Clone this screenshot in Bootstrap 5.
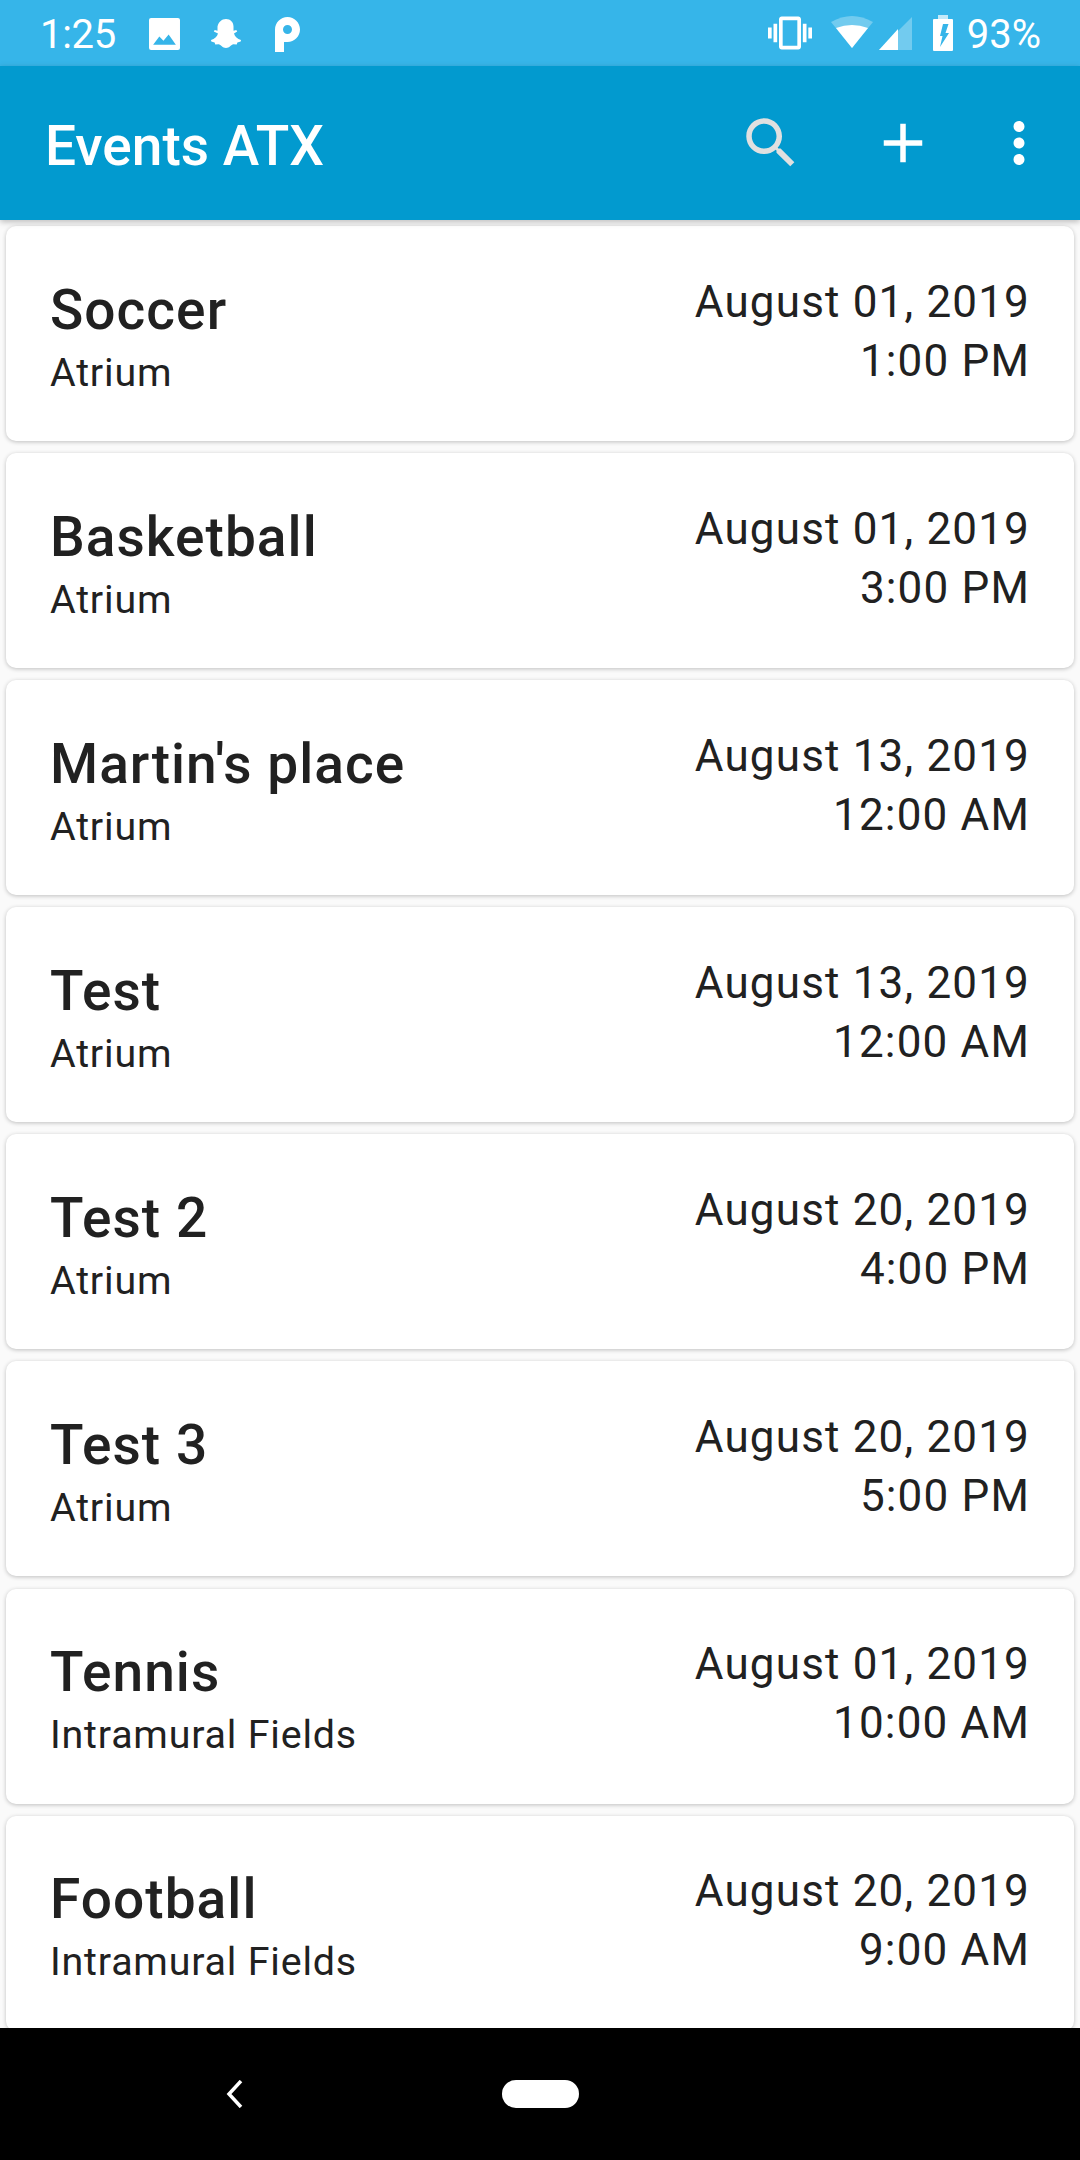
<!DOCTYPE html>
<html lang="en">
<head>
    <meta charset="UTF-8">
    <meta name="viewport" content="width=device-width, initial-scale=1.0">
    <title>Events ATX</title>
    <link href="https://cdn.jsdelivr.net/npm/bootstrap@5.3.0/dist/css/bootstrap.min.css" rel="stylesheet">
    <style>
        body {
            width: 1080px;
            height: 2160px;
            overflow: hidden;
            font-family: Roboto, "Liberation Sans", sans-serif;
            background: #fafafa;
            color: #212121;
        }

        /* ステータスバー */
        .status-strip {
            height: 66px;
            background: #36b5e9;
            color: #fff;
            padding: 0 39px 0 40px;
            font-size: 40px;
            line-height: 66px;
        }

        .status-strip svg { fill: #fff; display: block; }
        .status-time { width: 109px; margin-top: 4px; letter-spacing: -.3px; }
        .status-pct { margin-left: 14px; margin-top: 4px; }
        .ico-image { margin-top: 2px; }
        .ico-ghost { margin-left: 31px; margin-top: 2px; }
        .ico-p { margin-left: 34px; margin-top: 2px; }
        .ico-wifi { margin-left: 19px; margin-top: -2px; }
        .ico-signal { margin-left: 6px; }
        .ico-batt { margin-left: 21px; }

        /* アプリバー */
        .app-strip {
            height: 154px;
            background: #029acf;
            padding: 6px 28px 0 45px;
            box-shadow: 0 2px 6px rgba(0, 0, 0, .25);
            position: relative;
            z-index: 1;
        }

        .app-title {
            font-size: 55px;
            font-weight: 500;
            color: #fff;
            margin: 0;
        }

        .act-icon { width: 66px; height: 66px; fill: #fff; margin-top: -6px; }
        .act-search { fill: #e0e0e0; margin-right: 66px; }
        .act-plus { margin-right: 50px; }

        /* リスト */
        .event-list {
            padding: 6px 6px 0;
            gap: 12.1px;
            overflow: hidden;
        }

        .event-card {
            flex: none;
            height: 215px;
            padding: 0 44px 0 45px;
            border: 0;
            border-radius: 10px;
            box-shadow: 0 1px 4px rgba(0, 0, 0, .24);
        }

        .event-left { padding-top: 18px; margin-left: -1px; }

        .event-name {
            font-size: 55px;
            font-weight: 500;
            line-height: 60px;
            letter-spacing: 1.05px;
        }

        .event-place {
            font-size: 39.4px;
            line-height: 66px;
            letter-spacing: .8px;
        }

        .event-when {
            font-size: 44px;
            line-height: 59px;
            letter-spacing: 1.17px;
            text-align: right;
            padding-bottom: 4px;
        }

        /* ナビゲーションバー */
        .nav-strip {
            height: 132px;
            background: #000;
            padding-left: 226px;
            position: relative;
            z-index: 2;
        }

        .nav-back { margin-right: 258px; }
        .nav-home {
            width: 77px;
            height: 28px;
            background: #fff;
            border-radius: 14px;
        }
    </style>
</head>
<body class="d-flex flex-column">

<div class="status-strip d-flex align-items-center flex-shrink-0">
    <span class="status-time">1:25</span>
    <svg class="ico-image" width="31" height="32" viewBox="0 0 30 31"><path fill-rule="evenodd" d="M2 0h26a2 2 0 0 1 2 2v27a2 2 0 0 1-2 2H2a2 2 0 0 1-2-2V2a2 2 0 0 1 2-2zM4 26h22l-7-10-5 6-4-4z"/></svg>
    <svg class="ico-ghost" width="30" height="30" viewBox="0 0 30 30"><path d="M15 0c4.500 0 7.500 3.300 7.500 7.500v4.200l2.800-.7.900 1.400-3.200 2.100c.9 3.300 3.300 5.500 7 6.500l-.3 1.500-3.300 1-.7 2-3.300-.2c-2.200.4-4 3.700-7.400 3.700s-5.200-3.300-7.400-3.700l-3.300.2-.7-2-3.300-1-.3-1.500c3.700-1 6.100-3.200 7-6.500L2.800 12.400l.9-1.400 2.800.7V7.500C7.500 3.300 10.500 0 15 0z"/></svg>
    <svg class="ico-p" width="25" height="35" viewBox="0 0 25 35"><path fill-rule="evenodd" d="M0 12.500C0 5.600 5.600 0 12.500 0S25 5.600 25 12.500 19.400 25 12.500 25H9v10H0zM12.500 8a4.500 4.500 0 1 0 0 9 4.500 4.500 0 0 0 0-9z"/></svg>
    <div class="d-flex align-items-center ms-auto">
        <svg width="44" height="44" viewBox="0 0 24 24"><path d="M0 15h2V9H0v6zm3 2h2V7H3v10zm19-8v6h2V9h-2zm-3 8h2V7h-2v10zM16.500 3h-9C6.670 3 6 3.670 6 4.500v15c0 .83.67 1.500 1.500 1.500h9c.83 0 1.500-.67 1.500-1.500v-15c0-.83-.67-1.500-1.500-1.500zM16 19H8V5h8v14z"/></svg>
        <svg class="ico-wifi" width="42" height="32" viewBox="0 0 42 32"><path opacity=".3" d="M0 6Q21-6 42 6L21 32z"/><path d="M5 12Q21 6 37 12L21 32z"/></svg>
        <svg class="ico-signal" width="33" height="33" viewBox="0 0 33 33"><path opacity=".3" d="M0 33 33 0v33z"/><path d="M0 33 19 12v21z"/></svg>
        <svg class="ico-batt" width="20" height="36" viewBox="0 0 20 36"><path opacity=".7" d="M5 0h10v4H5z"/><path fill-rule="evenodd" d="M1 4h18a1 1 0 0 1 1 1v30a1 1 0 0 1-1 1H1a1 1 0 0 1-1-1V5a1 1 0 0 1 1-1zM10 9l-3 12h2.500L7 32l9-14h-3.500l3-9z"/></svg>
        <span class="status-pct">93%</span>
    </div>
</div>

<div class="app-strip d-flex align-items-center flex-shrink-0">
    <h1 class="app-title me-auto">Events ATX</h1>
    <svg class="act-icon act-search" viewBox="0 0 24 24"><path d="M15.500 14h-.79l-.28-.27C15.410 12.590 16 11.110 16 9.500 16 5.910 13.090 3 9.500 3S3 5.910 3 9.500 5.910 16 9.500 16c1.610 0 3.090-.59 4.230-1.570l.27.28v.79l5 4.990L20.490 19l-4.990-5zm-6 0C7.010 14 5 11.990 5 9.500S7.010 5 9.500 5 14 7.010 14 9.500 11.990 14 9.500 14z"/></svg>
    <svg class="act-icon act-plus" viewBox="0 0 24 24"><path d="M19 13h-6v6h-2v-6H5v-2h6V5h2v6h6v2z"/></svg>
    <svg class="act-icon" viewBox="0 0 24 24"><path d="M12 8c1.100 0 2-.9 2-2s-.9-2-2-2-2 .9-2 2 .9 2 2 2zm0 2c-1.100 0-2 .9-2 2s.9 2 2 2 2-.9 2-2-.9-2-2-2zm0 6c-1.100 0-2 .9-2 2s.9 2 2 2 2-.9 2-2-.9-2-2-2z"/></svg>
</div>

<main class="event-list d-flex flex-column flex-grow-1">
    <div class="card event-card flex-row justify-content-between align-items-center">
        <div class="event-left"><div class="event-name">Soccer</div><div class="event-place">Atrium</div></div>
        <div class="event-when">August 01, 2019<br>1:00 PM</div>
    </div>
    <div class="card event-card flex-row justify-content-between align-items-center">
        <div class="event-left"><div class="event-name">Basketball</div><div class="event-place">Atrium</div></div>
        <div class="event-when">August 01, 2019<br>3:00 PM</div>
    </div>
    <div class="card event-card flex-row justify-content-between align-items-center">
        <div class="event-left"><div class="event-name">Martin's place</div><div class="event-place">Atrium</div></div>
        <div class="event-when">August 13, 2019<br>12:00 AM</div>
    </div>
    <div class="card event-card flex-row justify-content-between align-items-center">
        <div class="event-left"><div class="event-name">Test</div><div class="event-place">Atrium</div></div>
        <div class="event-when">August 13, 2019<br>12:00 AM</div>
    </div>
    <div class="card event-card flex-row justify-content-between align-items-center">
        <div class="event-left"><div class="event-name">Test 2</div><div class="event-place">Atrium</div></div>
        <div class="event-when">August 20, 2019<br>4:00 PM</div>
    </div>
    <div class="card event-card flex-row justify-content-between align-items-center">
        <div class="event-left"><div class="event-name">Test 3</div><div class="event-place">Atrium</div></div>
        <div class="event-when">August 20, 2019<br>5:00 PM</div>
    </div>
    <div class="card event-card flex-row justify-content-between align-items-center">
        <div class="event-left"><div class="event-name">Tennis</div><div class="event-place">Intramural Fields</div></div>
        <div class="event-when">August 01, 2019<br>10:00 AM</div>
    </div>
    <div class="card event-card flex-row justify-content-between align-items-center">
        <div class="event-left"><div class="event-name">Football</div><div class="event-place">Intramural Fields</div></div>
        <div class="event-when">August 20, 2019<br>9:00 AM</div>
    </div>
</main>

<div class="nav-strip d-flex align-items-center flex-shrink-0">
    <svg class="nav-back" width="18" height="28" viewBox="0 0 18 28"><path d="M15 1 3 14l12 13" fill="none" stroke="#fff" stroke-width="3.500"/></svg>
    <div class="nav-home"></div>
</div>

<script src="https://cdn.jsdelivr.net/npm/bootstrap@5.3.0/dist/js/bootstrap.bundle.min.js"></script>
</body>
</html>
